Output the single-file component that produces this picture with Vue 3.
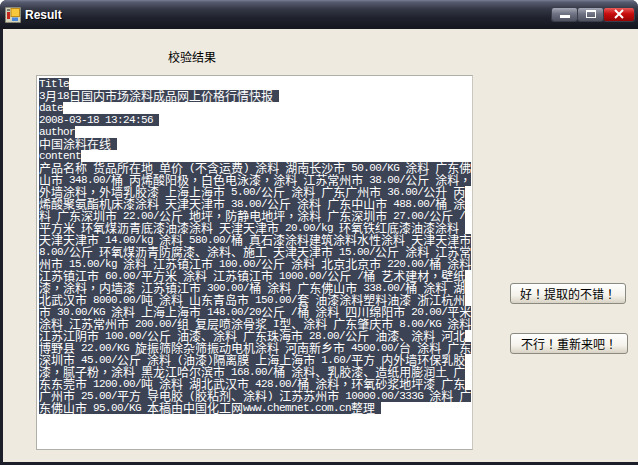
<template>
  <div class="window">
    <div class="titlebar">
      <svg class="app-icon" width="16" height="16" viewBox="0 0 16 16">
        <rect x="0.5" y="0.5" width="15" height="15" fill="#d4d4bc" stroke="#8c8c78" stroke-dasharray="2 1" />
        <rect x="6" y="1.5" width="8.5" height="8" fill="#f7c83c" stroke="#c08a18" />
        <rect x="2" y="5" width="3" height="7" fill="#c4281c" />
        <rect x="7" y="10.5" width="6" height="3.5" fill="#4a86d8" />
        <rect x="2" y="2" width="3" height="2" fill="#77776a" />
      </svg>
      <span class="caption">Result</span>
      <div class="controls">
        <div class="ctl">
          <svg width="12" height="8" viewBox="0 0 12 8"><rect x="1" y="5" width="10" height="3" fill="#fff" /></svg>
        </div>
        <div class="ctl">
          <svg width="12" height="10" viewBox="0 0 12 10"><rect x="1.5" y="1.5" width="9" height="7" fill="none" stroke="#fff" /><rect x="1" y="1" width="10" height="2" fill="#fff" /></svg>
        </div>
        <div class="ctl close">
          <svg width="12" height="10" viewBox="0 0 12 10"><path d="M2 1l8 8M10 1l-8 8" stroke="#fff" stroke-width="2" /></svg>
        </div>
      </div>
    </div>
    <div class="client">
      <div class="left">
        <div class="heading">校验结果</div>
        <div class="textbox">
          <div v-for="(row, i) in rows" :key="i" class="row">
            <span v-for="(seg, j) in row" :key="j" :class="seg.kind">{{ seg.text }}</span>
          </div>
        </div>
      </div>
      <div class="actions">
        <button class="btn">好<span class="punct">！</span>提取的不错<span class="punct">！</span></button>
        <button class="btn wide">不行<span class="punct">！</span>重新来吧<span class="punct">！</span></button>
      </div>
    </div>
  </div>
</template>

<script setup>
const lines = [
  "Title",
  "3月18日国内市场涂料成品网上价格行情快报 ",
  "date",
  "2008-03-18 13:24:56 ",
  "author",
  "中国涂料在线 ",
  "content",
  "产品名称 货品所在地 单价 (不含运费) 涂料 湖南长沙市 50.00/KG 涂料 广东佛",
  "山市 348.00/桶 丙烯酸阳极，白色电泳漆，涂料 江苏常州市 38.00/公斤 涂料，",
  "外墙涂料，外墙乳胶漆 上海上海市 5.00/公斤 涂料 广东广州市 36.00/公升 丙",
  "烯酸聚氨酯机床漆涂料 天津天津市 38.00/公斤 涂料 广东中山市 488.00/桶 涂",
  "料 广东深圳市 22.00/公斤 地坪，防静电地坪，涂料 广东深圳市 27.00/公斤 /",
  "平方米 环氧煤沥青底漆油漆涂料 天津天津市 20.00/kg 环氧铁红底漆油漆涂料 ",
  "天津天津市 14.00/kg 涂料 580.00/桶 真石漆涂料建筑涂料水性涂料 天津天津市",
  "8.00/公斤 环氧煤沥青防腐漆、涂料、施工 天津天津市 15.00/公斤 涂料 江苏常",
  "州市 15.00/kg 涂料 江苏镇江市 100.00/公斤 涂料 北京北京市 220.00/桶 涂料",
  "江苏镇江市 60.00/平方米 涂料 江苏镇江市 1000.00/公斤 /桶 艺术建材，壁纸",
  "漆，涂料，内墙漆 江苏镇江市 300.00/桶 涂料 广东佛山市 338.00/桶 涂料 湖",
  "北武汉市 8000.00/吨 涂料 山东青岛市 150.00/套 油漆涂料塑料油漆 浙江杭州",
  "市 30.00/KG 涂料 上海上海市 148.00/20公斤 /桶 涂料 四川绵阳市 20.00/平米",
  "涂料 江苏常州市 200.00/组 复层喷涂骨浆 I型、涂料 广东肇庆市 8.00/KG 涂料",
  "江苏江阴市 100.00/公斤 油漆、涂料 广东珠海市 28.00/公斤 油漆、涂料 河北",
  "博野县 22.00/KG 旋振筛除杂筛振动电机涂料 河南新乡市 4500.00/台 涂料 广东",
  "深圳市 45.00/公斤 涂料 (油漆)隔离膜 上海上海市 1.60/平方 内外墙环保乳胶",
  "漆，腻子粉，涂料 黑龙江哈尔滨市 168.00/桶 涂料、乳胶漆、造纸用膨润土 广",
  "东东莞市 1200.00/吨 涂料 湖北武汉市 428.00/桶 涂料，环氧砂浆地坪漆 广东",
  "广州市 25.00/平方 导电胶 (胶粘剂、涂料) 江苏苏州市 10000.00/333G 涂料 广",
  "东佛山市 95.00/KG 本稿由中国化工网www.chemnet.com.cn整理 ",
];

// latin runs are 6px a cell and cjk runs 12px, so they get separate spans
const rows = lines.map((line) =>
  (line.match(/[\x20-\x7e]+|，|[^\x20-\x7e，]+/g) || []).map((text) => ({
    text,
    kind: /^[\x20-\x7e]/.test(text) ? "latin" : text === "，" ? "punct" : "cjk",
  }))
);
</script>

<style scoped>
.window {
  width: 638px;
  height: 465px;
  display: flex;
  flex-direction: column;
  box-sizing: border-box;
  background: #1c1f2a;
  border-radius: 7px 7px 0 0;
  overflow: hidden;
  font-family: "Noto Sans CJK SC", sans-serif;
}

.titlebar {
  height: 29px;
  flex: none;
  display: flex;
  align-items: center;
  padding: 0 4px 0 5px;
  background: linear-gradient(to bottom, #7b7f96 0, #585c70 2px, #343846 9px, #1f222d 18px, #14161e 29px);
}

.app-icon {
  margin-right: 4px;
}

.caption {
  color: #fff;
  font: bold 12px "Liberation Sans", sans-serif;
  text-shadow: 1px 1px 0 #000;
}

.controls {
  margin-left: auto;
  display: flex;
  gap: 1px;
  margin-bottom: 1px;
}

.ctl {
  width: 25px;
  height: 13px;
  display: flex;
  align-items: center;
  justify-content: center;
  border-radius: 2px;
  background: linear-gradient(to bottom, #a4a8b6, #6e7282 45%, #4e5160);
  box-shadow: 0 0 0 1px #3a3d4a;
}

.close {
  width: 30px;
  background: linear-gradient(to bottom, #e85a58, #c80c0c 45%, #960404);
}

.client {
  flex: 1;
  margin: 0 0 3px 3px;
  padding-left: 33px;
  display: flex;
  background: #eeeadf;
}

.heading {
  margin: 21px 0 0 132px;
  height: 25px;
  font-size: 12px;
  line-height: 14px;
  color: #000;
}

.textbox {
  width: 437px;
  height: 375px;
  box-sizing: border-box;
  padding: 2px 0 0 2px;
  display: flex;
  flex-direction: column;
  align-items: flex-start;
  background: #fff;
  border: 1px solid #b0b0a8;
  border-right-color: #c8c8c0;
}

.row {
  display: flex;
  height: 12px;
  white-space: pre;
  color: #fff;
  background: #3c4354;
}

.row span {
  display: block;
  height: 12px;
  line-height: 12px;
}

.cjk {
  font-size: 12px;
}

.latin {
  font-family: "Liberation Mono", monospace;
  font-size: 11px;
  letter-spacing: -0.6px;
}

/* TC centres full width punctuation in its cell, as the reference does */
.punct {
  font-family: "Noto Sans CJK TC", sans-serif;
  font-size: 12px;
}

.actions {
  margin-left: 37px;
  padding-top: 254px;
  display: flex;
  flex-direction: column;
  align-items: flex-start;
  gap: 29px;
}

.btn {
  width: 116px;
  height: 21px;
  padding: 0;
  font-family: inherit;
  font-size: 12px;
  line-height: 14px;
  color: #000;
  border: 1px solid #8a8a80;
  border-radius: 3px;
  background: linear-gradient(to bottom, #fff, #f4f2ea 60%, #d8d2c4);
}

.wide {
  width: 118px;
}
</style>

<style>
html,
body {
  margin: 0;
  background: #fff;
}
</style>
